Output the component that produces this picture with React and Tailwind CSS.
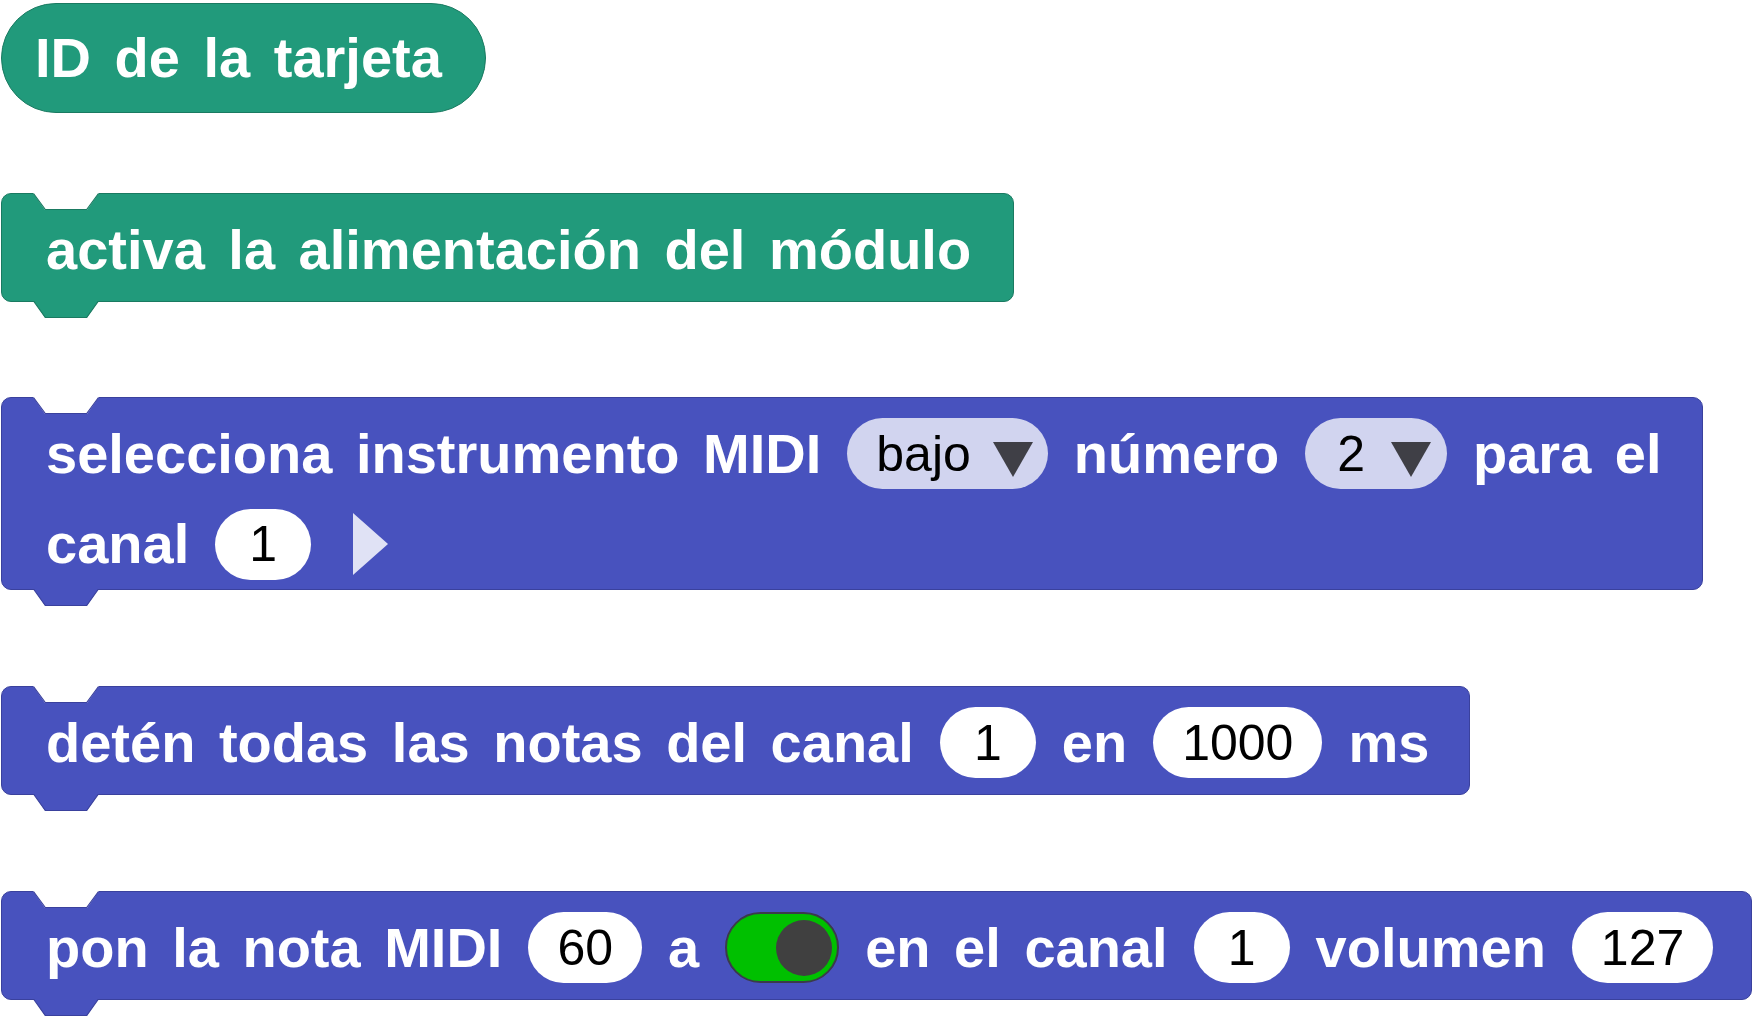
const FONT = "font-['Liberation_Sans',Arial,sans-serif]";

const THEMES = {
  green: { box: "bg-[#219a7b] border-[#1a7a61]", fill: "#219a7b", line: "#1a7a61" },
  blue: { box: "bg-[#4852be] border-[#3a419d]", fill: "#4852be", line: "#3a419d" },
};

// notch cut out of the top edge
function Notch({ line }) {
  return (
    <svg className="absolute left-[31px] top-[-1px]" width="66" height="18" viewBox="0 0 66 18">
      <path d="M0 0 L12 17 L54 17 L66 0 Z" fill="#ffffff" />
      <path d="M0.5 0.5 L12.3 16.5 L53.7 16.5 L65.5 0.5" fill="none" stroke={line} strokeWidth="1.2" />
    </svg>
  );
}

// tab that hangs under the bottom edge
function Tab({ fill, line }) {
  return (
    <svg className="absolute left-[31px] top-full" width="66" height="18" viewBox="0 0 66 18">
      <path d="M0 -1 L12 16.5 L54 16.5 L66 -1 Z" fill={fill} />
      <path d="M0.5 0 L12.3 16.5 L53.7 16.5 L65.5 0" fill="none" stroke={line} strokeWidth="1.2" />
    </svg>
  );
}

function Label({ children }) {
  return (
    <span className="text-white font-bold text-[56px] leading-none whitespace-nowrap [word-spacing:8px]">
      {children}
    </span>
  );
}

function Num({ children }) {
  return (
    <span className="h-[71px] min-w-[96px] px-[29px] rounded-full bg-white flex items-center justify-center text-black text-[50px] leading-none">
      {children}
    </span>
  );
}

function Dropdown({ children, className }) {
  return (
    <span className={`h-[71px] rounded-full bg-[#d1d4ef] flex items-center text-black text-[50px] leading-none ${className}`}>
      {children}
      <svg className="mt-[12px]" width="40" height="35" viewBox="0 0 40 35">
        <path d="M0 0 L40 0 L20 35 Z" fill="#3f3f46" />
      </svg>
    </span>
  );
}

function Toggle() {
  return (
    <span className="w-[114px] h-[71px] rounded-full bg-[#00c000] border-2 border-[#3b3b4a] flex items-center justify-end pr-[5px]">
      <span className="w-[56px] h-[56px] rounded-full bg-[#404040]" />
    </span>
  );
}

function StackBlock({ theme, children, pr = "pr-[38px]" }) {
  const t = THEMES[theme];
  return (
    <div className={`relative border rounded-[10px] pl-[44px] pt-[20px] pb-[16px] ${pr} ${t.box}`}>
      <Notch line={t.line} />
      {children}
      <Tab fill={t.fill} line={t.line} />
    </div>
  );
}

function Row({ children, className = "" }) {
  return <div className={`flex items-center gap-[26px] h-[71px] ${className}`}>{children}</div>;
}

export default function App() {
  return (
    <div className={`min-h-screen bg-white pl-[1px] pt-[3px] flex flex-col items-start ${FONT}`}>
      <div className="h-[110px] rounded-full border bg-[#219a7b] border-[#1a7a61] pl-[33px] pr-[43px] flex items-center">
        <Label>ID de la tarjeta</Label>
      </div>

      <div className="mt-[80px]">
        <StackBlock theme="green" pr="pr-[42px]">
          <Row>
            <Label>activa la alimentación del módulo</Label>
          </Row>
        </StackBlock>
      </div>

      <div className="mt-[95px]">
        <div className="relative border rounded-[10px] pl-[44px] pr-[40px] pt-[20px] pb-[9px] bg-[#4852be] border-[#3a419d]">
          <Notch line="#3a419d" />
          <Row>
            <Label>selecciona instrumento MIDI</Label>
            <Dropdown className="pl-[29px] pr-[15px] gap-[22px]">bajo</Dropdown>
            <Label>número</Label>
            <Dropdown className="pl-[32px] pr-[16px] gap-[26px]">2</Dropdown>
            <Label>para el</Label>
          </Row>
          <Row className="mt-[19px] h-[72px]">
            <Label>canal</Label>
            <Num>1</Num>
            <svg className="ml-[16px]" width="35" height="62" viewBox="0 0 35 62">
              <path d="M0 0 L35 31 L0 62 Z" fill="#e0e2f5" />
            </svg>
          </Row>
          <Tab fill="#4852be" line="#3a419d" />
        </div>
      </div>

      <div className="mt-[96px]">
        <StackBlock theme="blue" pr="pr-[40px]">
          <Row>
            <Label>detén todas las notas del canal</Label>
            <Num>1</Num>
            <Label>en</Label>
            <Num>1000</Num>
            <Label>ms</Label>
          </Row>
        </StackBlock>
      </div>

      <div className="mt-[96px]">
        <StackBlock theme="blue">
          <Row>
            <Label>pon la nota MIDI</Label>
            <Num>60</Num>
            <Label>a</Label>
            <Toggle />
            <Label>en el canal</Label>
            <Num>1</Num>
            <Label>volumen</Label>
            <Num>127</Num>
          </Row>
        </StackBlock>
      </div>
    </div>
  );
}
